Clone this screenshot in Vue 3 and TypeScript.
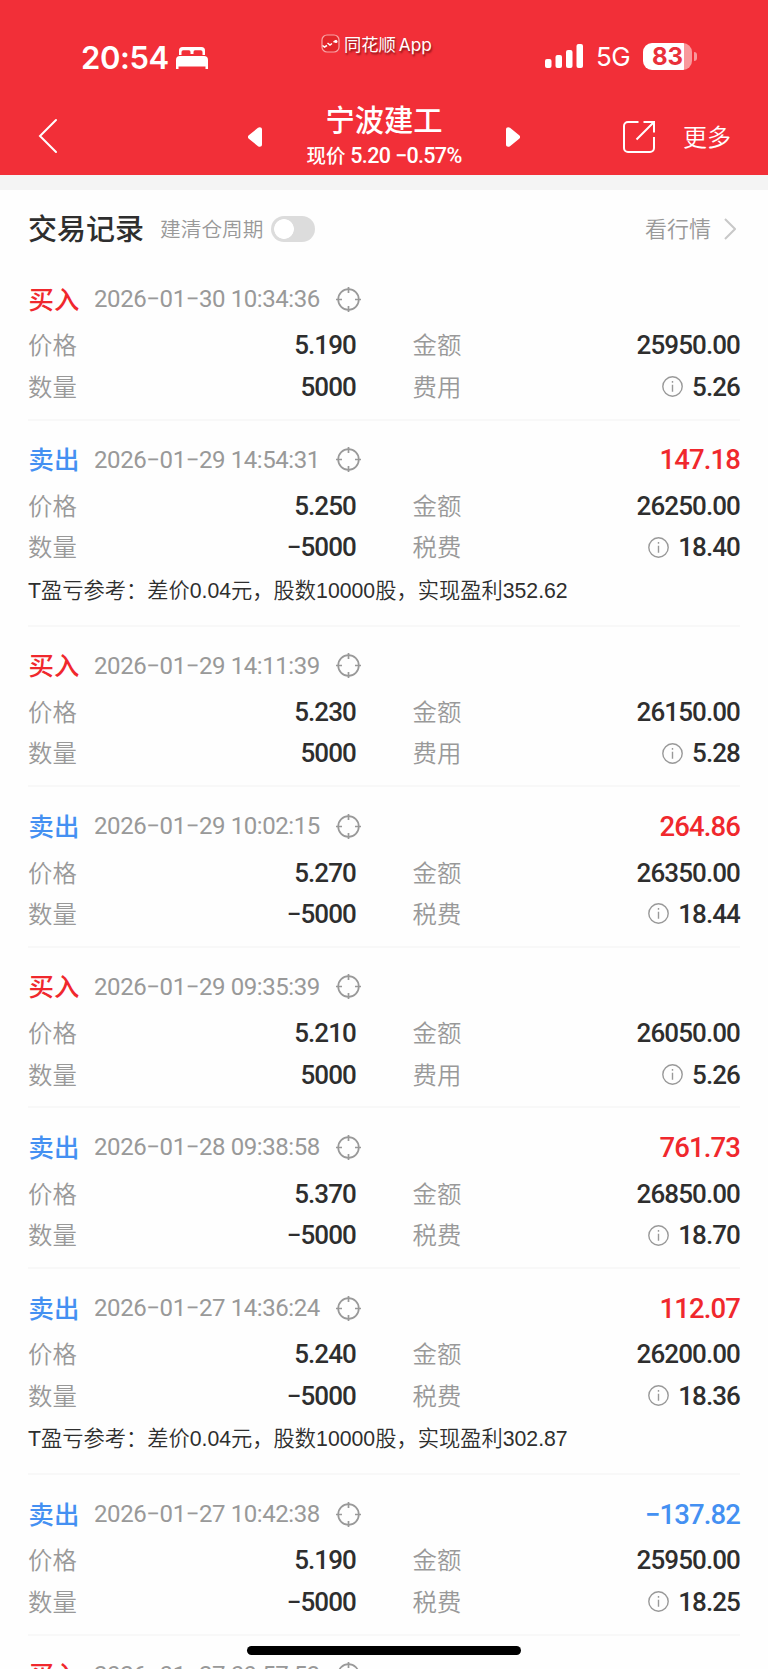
<script setup lang="ts">
interface Trade {
  side: 'buy' | 'sell'
  time: string
  price: string
  qty: string
  amount: string
  fee: string
  profit?: string
  note?: string
}

const trades: Trade[] = [
  { side: 'buy', time: '2026−01−30 10:34:36', price: '5.190', qty: '5000', amount: '25950.00', fee: '5.26' },
  { side: 'sell', time: '2026−01−29 14:54:31', price: '5.250', qty: '−5000', amount: '26250.00', fee: '18.40', profit: '147.18', note: 'T盈亏参考：差价0.04元，股数10000股，实现盈利352.62' },
  { side: 'buy', time: '2026−01−29 14:11:39', price: '5.230', qty: '5000', amount: '26150.00', fee: '5.28' },
  { side: 'sell', time: '2026−01−29 10:02:15', price: '5.270', qty: '−5000', amount: '26350.00', fee: '18.44', profit: '264.86' },
  { side: 'buy', time: '2026−01−29 09:35:39', price: '5.210', qty: '5000', amount: '26050.00', fee: '5.26' },
  { side: 'sell', time: '2026−01−28 09:38:58', price: '5.370', qty: '−5000', amount: '26850.00', fee: '18.70', profit: '761.73' },
  { side: 'sell', time: '2026−01−27 14:36:24', price: '5.240', qty: '−5000', amount: '26200.00', fee: '18.36', profit: '112.07', note: 'T盈亏参考：差价0.04元，股数10000股，实现盈利302.87' },
  { side: 'sell', time: '2026−01−27 10:42:38', price: '5.190', qty: '−5000', amount: '25950.00', fee: '18.25', profit: '−137.82' },
]
// The next record is only partly scrolled into view, so just its title line is rendered.
const upcoming = { side: '买入', time: '2026−01−27 09:57:53' }
</script>

<template>
  <div class="screen">
    <header class="top">
      <div class="status">
        <div class="clock">
          <span class="time">20:54</span>
          <svg class="bed" width="32" height="22" viewBox="0 0 32 22" fill="#fff">
            <path d="M3 8V3.500A3.500 3.500 0 0 1 6.500 0h19A3.500 3.500 0 0 1 29 3.500V8h-2.500V5a1.800 1.800 0 0 0-1.800-1.800H19a1.800 1.800 0 0 0-1.500 1.800v2h-3V5A1.800 1.800 0 0 0 13 3.200H7.300A1.800 1.800 0 0 0 5.500 5v3z" />
            <path d="M0 22V13a4 4 0 0 1 4-4h24a4 4 0 0 1 4 4v9h-2.500v-2.500h-27V22z" />
          </svg>
        </div>
        <div class="brand">
          <svg width="19" height="19" viewBox="0 0 19 19" fill="none">
            <rect x="1" y="1" width="17" height="17" rx="5" fill="#e3262b" stroke="#f8a4a6" stroke-width="1.200" />
            <path d="M1.500 11.500l2 1.500 2.500-1.500M6.500 9l2.500 2 2-1.500M12.500 8l3-1.500" stroke="#fff" stroke-width="1.500" />
            <circle cx="15" cy="7.500" r="1.500" fill="#fff" />
          </svg>
          <span>同花顺<em>App</em></span>
        </div>
        <div class="signal">
          <svg width="38" height="24" viewBox="0 0 38 24" fill="#fff">
            <rect x="0" y="15" width="6.500" height="9" rx="2" />
            <rect x="10.500" y="11" width="6.500" height="13" rx="2" />
            <rect x="21" y="6" width="6.500" height="18" rx="2" />
            <rect x="31.500" y="0" width="6.500" height="24" rx="2" />
          </svg>
          <span class="net">5G</span>
          <span class="battery"><b>83</b></span>
          <i class="cap"></i>
        </div>
      </div>
      <nav class="nav">
        <svg class="back" width="20" height="36" viewBox="0 0 20 36" fill="none" stroke="#fff" stroke-width="2" stroke-linecap="round">
          <path d="M18 2L2 18l16 16" />
        </svg>
        <svg class="prev" width="14" height="20" viewBox="0 0 14 20" fill="#fff">
          <path d="M.8 8.300L10 .8C12 -.5 14 .5 14 2.500v15c0 2-2 3-4 1.700L.8 11.700a2.200 2.200 0 0 1 0-3.400z" />
        </svg>
        <div class="stock">
          <h1>宁波建工</h1>
          <p>现价 <span>5.20 −0.57%</span></p>
        </div>
        <svg class="next" width="14" height="20" viewBox="0 0 14 20" fill="#fff">
          <path d="M13.200 8.300L4 .8C2 -.5 0 .5 0 2.500v15c0 2 2 3 4 1.700l9.200-7.500a2.200 2.200 0 0 0 0-3.400z" />
        </svg>
        <svg class="share" width="34" height="34" viewBox="0 0 34 34" fill="none" stroke="#fff" stroke-width="2">
          <path d="M16.500 2H6a4 4 0 0 0-4 4v22a4 4 0 0 0 4 4h22a4 4 0 0 0 4-4V17" />
          <path d="M21.500 2H32v10.500M31.500 2.500L14.500 19.500" />
        </svg>
        <span class="more">更多</span>
      </nav>
    </header>
    <div class="gap"></div>
    <main>
      <div class="heading">
        <h2>交易记录</h2>
        <span class="cycle">建清仓周期</span>
        <span class="toggle"></span>
        <span class="quote">看行情</span>
        <svg width="12" height="22" viewBox="0 0 12 22" fill="none" stroke="#c8c8c8" stroke-width="2">
          <path d="M1 1l10 10L1 21" />
        </svg>
      </div>
      <section v-for="t in trades" :key="t.time" class="trade" :class="{ noted: t.note }">
        <div class="title">
          <span class="side" :class="t.side">{{ t.side === 'buy' ? '买入' : '卖出' }}</span>
          <span class="when">{{ t.time }}</span>
          <svg width="25" height="25" viewBox="0 0 25 25" fill="none" stroke="#999" stroke-width="1.700">
            <circle cx="12.500" cy="12.500" r="10.300" />
            <path d="M12.500 0v6M12.500 19v6M0 12.500h6M19 12.500h6" />
          </svg>
          <span v-if="t.profit" class="profit" :class="t.profit.startsWith('−') ? 'loss' : 'gain'">{{ t.profit }}</span>
        </div>
        <div class="row">
          <span class="label">价格</span><span class="num">{{ t.price }}</span>
          <span class="label second">金额</span><span class="num">{{ t.amount }}</span>
        </div>
        <div class="row">
          <span class="label">数量</span><span class="num">{{ t.qty }}</span>
          <span class="label second">{{ t.side === 'buy' ? '费用' : '税费' }}</span>
          <span class="num">
            <svg width="21" height="21" viewBox="0 0 21 21" fill="none" stroke="#999" stroke-width="1.400">
              <circle cx="10.500" cy="10.500" r="9.700" />
              <path d="M10.500 8.800v7M10.500 5v1.800" />
            </svg>{{ t.fee }}
          </span>
        </div>
        <p v-if="t.note" class="note">{{ t.note }}</p>
      </section>
      <section class="trade">
        <div class="title">
          <span class="side buy">{{ upcoming.side }}</span>
          <span class="when">{{ upcoming.time }}</span>
          <svg width="25" height="25" viewBox="0 0 25 25" fill="none" stroke="#999" stroke-width="1.700">
            <circle cx="12.500" cy="12.500" r="10.300" />
            <path d="M12.500 0v6M12.500 19v6M0 12.500h6M19 12.500h6" />
          </svg>
        </div>
      </section>
    </main>
    <div class="home"></div>
  </div>
</template>

<style>
body {
  margin: 0;
}
</style>

<style scoped>
.screen {
  position: relative;
  width: 768px;
  height: 1669px;
  overflow: hidden;
  background: #fefefe;
  color: #2e2e2e;
  font-family: Roboto, "Noto Sans CJK SC", sans-serif;
  white-space: nowrap;
}
svg {
  display: block;
  flex: none;
}
h1, h2, p {
  margin: 0;
}
.top {
  height: 175px;
  background: #f22f38;
  color: #fff;
}
.status {
  display: grid;
  grid-template-columns: 321px 224px 1fr;
  height: 95px;
  font-family: Inter, "Noto Sans CJK SC", sans-serif;
}
.clock {
  display: flex;
  align-items: center;
  height: 40px;
  margin-top: 37px;
  padding-left: 81px;
}
.time {
  width: 95px;
  font-size: 31px;
  font-weight: 600;
  letter-spacing: -0.4px;
}
.bed {
  margin-top: 1px;
}
.brand {
  display: flex;
  align-items: center;
  height: 24px;
  margin-top: 31px;
  gap: 4px;
  font-size: 17.300px;
  text-shadow: 1px 2px 2px rgba(60, 0, 0, 0.6);
}
.brand em {
  margin-left: 3px;
  font-style: normal;
}
.signal {
  display: flex;
  align-items: center;
  height: 28px;
  margin-top: 42px;
}
.net {
  width: 47px;
  margin-left: 13px;
  font-size: 26px;
  letter-spacing: -0.5px;
}
.battery {
  display: flex;
  align-items: center;
  justify-content: center;
  width: 49px;
  height: 27px;
  border-radius: 9px;
  background: linear-gradient(90deg, #fff 41px, #f9989c 41px);
  color: #e9303a;
  font-size: 24px;
}
.battery b {
  font-weight: 700;
}
.cap {
  width: 3px;
  height: 9px;
  margin-left: 2px;
  border-radius: 0 4px 4px 0;
  background: #f9989c;
}
.nav {
  display: flex;
  align-items: center;
  height: 80px;
}
.back {
  margin: 2px 0 0 38px;
}
.prev {
  margin: 4px 0 0 190px;
}
.stock {
  width: 244px;
  text-align: center;
}
.stock h1 {
  margin-top: 3px;
  font-size: 29.300px;
  font-weight: 500;
  line-height: 40px;
}
.stock p {
  font-size: 19.500px;
  font-weight: 500;
  line-height: 30px;
}
.stock p span {
  font-size: 21.500px;
  letter-spacing: -0.65px;
}
.next {
  margin-top: 4px;
}
.share {
  margin: 3px 0 0 102px;
}
.more {
  margin: 1px 0 0 27px;
  font-size: 24px;
  font-weight: 350;
}
.gap {
  height: 15px;
  background: #f4f4f4;
}
main {
  padding: 0 28px;
}
.heading {
  display: flex;
  align-items: center;
  height: 70px;
  color: #999;
}
.heading h2 {
  width: 132px;
  margin-top: 9px;
  color: #2e2e2e;
  font-size: 29px;
  font-weight: 500;
  line-height: 78px;
}
.cycle {
  width: 111px;
  margin-top: 5px;
  font-size: 20.700px;
  font-weight: 350;
}
.toggle {
  width: 44px;
  height: 26px;
  margin-top: 7px;
  border-radius: 13px;
  background: radial-gradient(circle at 13px 13px, #fff 9.500px, #dcdcdc 10.200px);
}
.quote {
  margin: 4px 0 0 auto;
  font-size: 22px;
  font-weight: 350;
}
.heading svg {
  margin: 7px 4px 0 13px;
}
.trade {
  box-sizing: border-box;
  height: 160.600px;
  padding-top: 13.400px;
  border-bottom: 2px solid #f8f8f8;
}
.noted {
  height: 206px;
}
.title {
  display: flex;
  align-items: center;
  height: 51.400px;
}
.side {
  width: 65.500px;
  margin-top: -3px;
  padding-left: 0.500px;
  font-size: 25.400px;
  font-weight: 500;
}
.buy, .gain {
  color: #f0282d;
}
.sell, .loss {
  color: #4490f2;
}
.when {
  width: 242px;
  color: #999;
  font-size: 24px;
  letter-spacing: -0.42px;
}
.profit {
  margin-left: auto;
  font-size: 27.500px;
  font-weight: 500;
  letter-spacing: -0.9px;
}
.row {
  display: grid;
  grid-template-columns: 164px 164px 164px 1fr;
  align-items: center;
  height: 41.300px;
}
.label {
  margin-top: -3px;
  color: #999;
  font-size: 24.400px;
  font-weight: 350;
}
.label.second {
  padding-left: 56.500px;
}
.num {
  display: flex;
  align-items: center;
  justify-content: flex-end;
  font-size: 26px;
  font-weight: 500;
  letter-spacing: -0.9px;
}
.num svg {
  margin-right: 9px;
}
.note {
  font-family: "Liberation Sans", "Noto Sans CJK SC", sans-serif;
  font-size: 21.250px;
  font-weight: 350;
  line-height: 46.600px;
}
.home {
  position: absolute;
  left: 247px;
  top: 1646px;
  width: 274px;
  height: 9px;
  border-radius: 5px;
  background: #000;
}
</style>
